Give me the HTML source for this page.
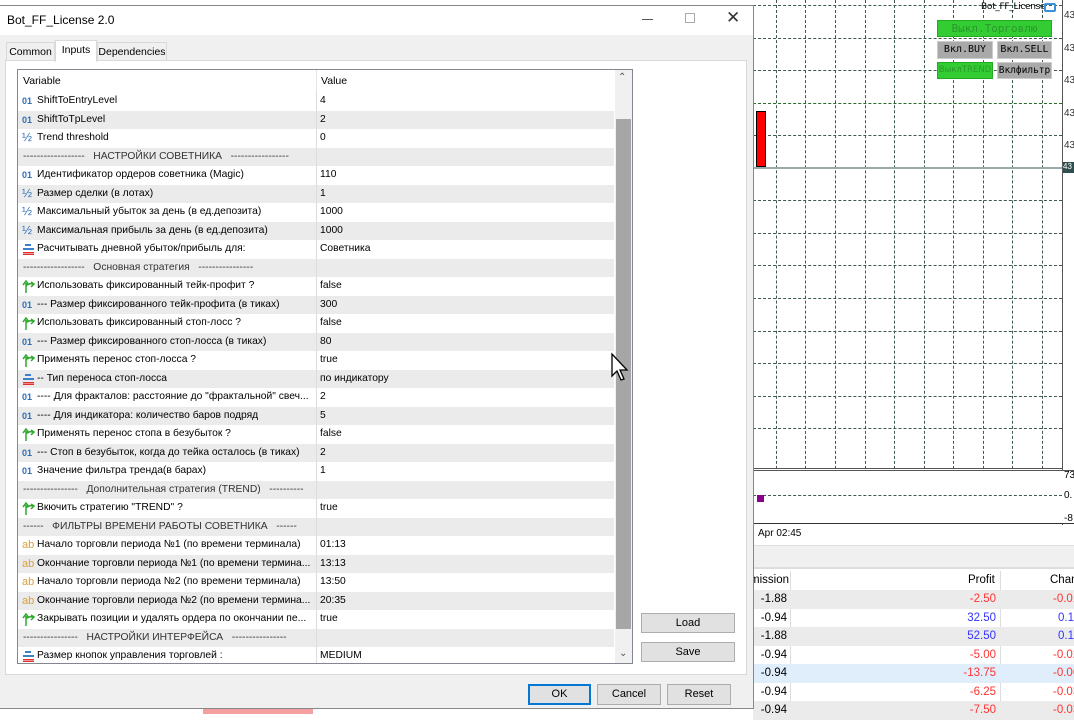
<!DOCTYPE html>
<html><head><meta charset="utf-8">
<style>
*{margin:0;padding:0;box-sizing:border-box}
body{width:1074px;height:714px;overflow:hidden;background:#fff;font-family:"Liberation Sans",sans-serif;font-size:10.5px;color:#000;position:relative}
.a{position:absolute}
.dlg{left:0;top:5px;width:754px;height:704px;background:#f0f0f0;border:1px solid #888;border-left:none}
.title{left:0;top:0;width:753px;height:29px;background:#fff}
.row{position:absolute;left:0;width:596px;height:18.5px;line-height:18px;white-space:nowrap;font-size:10.3px}
.row .v{position:absolute;left:19px;width:276px;overflow:hidden}
.row .val{position:absolute;left:302px;}
.row .sep{position:absolute;left:298px;top:0;width:1px;height:100%;background:#ddd}
.g{background:#ebebeb}
.ic{position:absolute;left:4px;top:0;width:14px;font-size:9px;color:#2f6db5}
.btn{position:absolute;background:#e1e1e1;border:1px solid #adadad;text-align:center;line-height:18px;font-size:11px}
.vl{position:absolute;top:0;width:0;border-left:1px dashed #3d5a50}
.hl{position:absolute;left:753px;width:309px;height:0;border-top:1px dashed #3d5a50}
.tr{position:absolute;left:753px;width:321px;height:18.5px;line-height:18px;font-size:11.5px}
.tr span{position:absolute;text-align:right}
</style></head><body>
<div class="a" style="left:753px;top:0;width:321px;height:545px;background:#fff"></div>
<div class="a" style="left:1062px;top:0;width:1px;height:525px;background:#555"></div>
<div class="vl" style="left:776px;height:524px"></div><div class="vl" style="left:805px;height:524px"></div><div class="vl" style="left:835px;height:524px"></div><div class="vl" style="left:865px;height:524px"></div><div class="vl" style="left:894px;height:524px"></div><div class="vl" style="left:924px;height:524px"></div><div class="vl" style="left:953px;height:524px"></div><div class="vl" style="left:983px;height:524px"></div><div class="vl" style="left:1012px;height:524px"></div><div class="vl" style="left:1042px;height:524px"></div>
<div class="hl" style="top:5px"></div><div class="hl" style="top:38px"></div><div class="hl" style="top:70px"></div><div class="hl" style="top:103px;border-color:#2a6a2a"></div><div class="hl" style="top:135px"></div>
<div class="a" style="left:753px;top:167px;width:309px;height:2px;background:#9aa"></div>
<div class="hl" style="top:200px"></div><div class="hl" style="top:233px"></div><div class="hl" style="top:265px"></div><div class="hl" style="top:298px"></div><div class="hl" style="top:331px"></div><div class="hl" style="top:363px"></div><div class="hl" style="top:396px"></div><div class="hl" style="top:428px"></div>
<div class="a" style="left:753px;top:468px;width:310px;height:1px;background:#555"></div>
<div class="a" style="left:753px;top:470px;width:321px;height:54px;background:#fff;border-top:1px solid #555;border-bottom:1px solid #333"></div>
<div class="hl" style="top:495px"></div>
<div class="a" style="left:757px;top:495px;width:7px;height:7px;background:#8b008b"></div>
<div class="a" style="left:756px;top:111px;width:10px;height:56px;background:#f00;border:1px solid #000"></div>
<div class="a" style="left:1064px;top:0;font-size:10px;color:#333;line-height:32.6px">43<br>43<br>43<br>43<br>43</div>
<div class="a" style="left:1063px;top:162px;width:11px;height:11px;background:#2f4f4f;color:#fff;font-size:8px">43</div>
<div class="a" style="left:1064px;top:470px;font-size:10px">73</div><div class="a" style="left:1064px;top:490px;font-size:10px">0.</div><div class="a" style="left:1064px;top:513px;font-size:10px">-8</div>
<div class="a" style="left:758px;top:528px;font-size:10px">Apr 02:45</div>
<div class="a" style="left:981px;top:2px;font-size:9px;font-family:'DejaVu Sans',sans-serif;letter-spacing:-0.3px">Bot_FF_License</div>
<div class="a" style="left:1044px;top:3px;width:12px;height:9px;border:2px solid #3a8fd8;border-radius:2px"></div>
<div class="a" style="left:937px;top:20px;width:115px;height:17px;background:#33cc33;border:1px solid #2a2;color:#2a9a2a;text-align:center;font:11px 'DejaVu Sans Mono',monospace;line-height:15px">Выкл.Торговлю</div>
<div class="a" style="left:937px;top:41px;width:56px;height:18px;background:#a9a9a9;border:1px solid #ccc;text-align:center;font:10px 'DejaVu Sans Mono',monospace;line-height:16px">Вкл.BUY</div>
<div class="a" style="left:997px;top:41px;width:55px;height:18px;background:#a9a9a9;border:1px solid #ccc;text-align:center;font:10px 'DejaVu Sans Mono',monospace;line-height:16px">Вкл.SELL</div>
<div class="a" style="left:937px;top:62px;width:56px;height:17px;background:#33cc33;border:1px solid #2a2;color:#2a9a2a;text-align:center;font:8.5px 'DejaVu Sans',sans-serif;line-height:15px;overflow:hidden">ВыклTREND</div>
<div class="a" style="left:997px;top:62px;width:55px;height:17px;background:#a9a9a9;border:1px solid #ccc;text-align:center;font:9.5px 'DejaVu Sans Mono',monospace;line-height:15px">Вклфильтр</div>
<div class="a" style="left:753px;top:545px;width:321px;height:24px;background:#f0f0f0;border-top:1px solid #ddd;border-bottom:2px solid #ddd"></div>
<div class="a" style="left:753px;top:571px;width:321px;height:19px;background:#fff;font-size:11.5px;line-height:18px"><span class="a" style="left:-3px">mission</span><span class="a" style="left:215px">Profit</span><span class="a" style="left:297px">Chan</span></div>
<div class="a" style="left:790px;top:571px;width:1px;height:143px;background:#ddd"></div>
<div class="a" style="left:1000px;top:571px;width:1px;height:143px;background:#ddd"></div>
<div class="tr g" style="top:590px"><span style="right:287px">-1.88</span><span style="right:78px;color:#f33">-2.50</span><span style="left:300px;color:#f33">-0.01</span></div>
<div class="tr" style="top:608.5px"><span style="right:287px">-0.94</span><span style="right:78px;color:#33f">32.50</span><span style="left:305px;color:#33f">0.15</span></div>
<div class="tr g" style="top:627px"><span style="right:287px">-1.88</span><span style="right:78px;color:#33f">52.50</span><span style="left:305px;color:#33f">0.12</span></div>
<div class="tr" style="top:645.5px"><span style="right:287px">-0.94</span><span style="right:78px;color:#f33">-5.00</span><span style="left:300px;color:#f33">-0.02</span></div>
<div class="tr" style="top:664px;background:#e0eefb"><span style="right:287px">-0.94</span><span style="right:78px;color:#f33">-13.75</span><span style="left:300px;color:#f33">-0.06</span></div>
<div class="tr" style="top:682.5px"><span style="right:287px">-0.94</span><span style="right:78px;color:#f33">-6.25</span><span style="left:300px;color:#f33">-0.03</span></div>
<div class="tr g" style="top:701px"><span style="right:287px">-0.94</span><span style="right:78px;color:#f33">-7.50</span><span style="left:300px;color:#f33">-0.03</span></div>
<div class="a" style="left:0;top:708px;width:753px;height:6px;background:#fff;border-top:1px solid #555"></div>
<div class="a" style="left:203px;top:709px;width:110px;height:5px;background:#f4a0a0"></div>

<div class="a dlg">
 <div class="a title"><span class="a" style="left:7px;top:7px;font-size:12px">Bot_FF_License 2.0</span>
  <div class="a" style="left:642px;top:13px;width:11px;height:1px;background:#555"></div>
  <div class="a" style="left:685px;top:7px;width:10px;height:10px;border:1px solid #aaa"></div>
  <span class="a" style="left:726px;top:2px;font-size:17px;color:#333">✕</span>
 </div>
 <div class="a" style="left:6px;top:36px;width:49px;height:19px;border:1px solid #d9d9d9;border-bottom:none;background:#f0f0f0;text-align:center;line-height:18px">Common</div>
 <div class="a" style="left:55px;top:34px;width:42px;height:22px;border:1px solid #d9d9d9;border-bottom:none;background:#fff;text-align:center;line-height:18px;z-index:2">Inputs</div>
 <div class="a" style="left:97px;top:36px;width:70px;height:19px;border:1px solid #d9d9d9;border-bottom:none;background:#f0f0f0;text-align:center;line-height:18px">Dependencies</div>
 <div class="a" style="left:5px;top:54px;width:742px;height:615px;background:#fff;border:1px solid #d9d9d9"></div>
 <div class="a" style="left:17px;top:63px;width:616px;height:595px;border:1px solid #828790;background:#fff;overflow:hidden">
  <div class="a" style="left:0;top:0;width:596px;height:22px;line-height:22px"><span class="a" style="left:5px">Variable</span><span class="a" style="left:303px">Value</span><div class="a" style="left:298px;top:0;width:1px;height:22px;background:#e5e5e5"></div></div>
  <div id="rows" class="a" style="left:0;top:22px;width:596px"></div>
  <div class="a" style="left:597px;top:0;width:17px;height:594px;background:#f0f0f0"></div>
  <div class="a" style="left:598px;top:49px;width:15px;height:510px;background:#a6a6a6"></div>
  <span class="a" style="left:600px;top:2px;font-size:10px;color:#555">⌃</span>
  <span class="a" style="left:601px;top:578px;font-size:10px;color:#555">⌄</span>
 </div>
 <div class="btn" style="left:641px;top:607px;width:94px;height:20px">Load</div>
 <div class="btn" style="left:641px;top:636px;width:94px;height:20px">Save</div>
 <div class="btn" style="left:528px;top:678px;width:63px;height:21px;border:2px solid #0078d7;line-height:17px">OK</div>
 <div class="btn" style="left:597px;top:678px;width:64px;height:21px">Cancel</div>
 <div class="btn" style="left:667px;top:678px;width:64px;height:21px">Reset</div>
</div>
<svg class="a" style="left:610px;top:352px" width="22" height="32" viewBox="0 0 22 32"><path d="M2 2 L2 24 L7 19 L11 28 L14 27 L10 18 L17 18 Z" fill="#fff" stroke="#000" stroke-width="1.3"/></svg>
<script>
var I={n:'<span class="ic" style="font-weight:bold">01</span>',h:'<span class="ic" style="font-size:12px;top:-1px">½</span>',b:'<svg class="ic" style="top:3px" width="14" height="13" viewBox="0 0 14 13"><path d="M4 13 V3 M1 5 L4 1 L7 5 M4 6 Q6 3 11 4 M9 2 L12 4 L9 7" stroke="#2eaa2e" stroke-width="1.5" fill="none"/></svg>',e:'<svg class="ic" style="top:4px" width="14" height="11" viewBox="0 0 14 11"><rect x="3" y="0" width="6" height="2" fill="#3a7fd0"/><rect x="1" y="4" width="11" height="2" fill="#3a7fd0"/><rect x="1" y="8" width="11" height="1.5" fill="#e03030"/><rect x="1" y="10" width="11" height="1" fill="#e03030"/></svg>',s:'<span class="ic" style="color:#d9a040;font-size:11px">ab</span>'};
var R=[['n','ShiftToEntryLevel','4'],['n','ShiftToTpLevel','2'],['h','Trend threshold','0'],['','------------------ &nbsp; НАСТРОЙКИ СОВЕТНИКА &nbsp; -----------------',''],['n','Идентификатор ордеров советника (Magic)','110'],['h','Размер сделки (в лотах)','1'],['h','Максимальный убыток за день (в ед.депозита)','1000'],['h','Максимальная прибыль за день (в ед.депозита)','1000'],['e','Расчитывать дневной убыток/прибыль для:','Советника'],['','------------------ &nbsp; Основная стратегия &nbsp; ----------------',''],['b','Использовать фиксированный тейк-профит ?','false'],['n','--- Размер фиксированного тейк-профита (в тиках)','300'],['b','Использовать фиксированный стоп-лосс ?','false'],['n','--- Размер фиксированного стоп-лосса (в тиках)','80'],['b','Применять перенос стоп-лосса ?','true'],['e','-- Тип переноса стоп-лосса','по индикатору'],['n','---- Для фракталов: расстояние до "фрактальной" свеч...','2'],['n','---- Для индикатора: количество баров подряд','5'],['b','Применять перенос стопа в безубыток ?','false'],['n','--- Стоп в безубыток, когда до тейка осталось (в тиках)','2'],['n','Значение фильтра тренда(в барах)','1'],['','---------------- &nbsp; Дополнительная стратегия (TREND) &nbsp; ----------',''],['b','Вкючить стратегию "TREND" ?','true'],['','------ &nbsp; ФИЛЬТРЫ ВРЕМЕНИ РАБОТЫ СОВЕТНИКА &nbsp; ------',''],['s','Начало торговли периода №1 (по времени терминала)','01:13'],['s','Окончание торговли периода №1 (по времени термина...','13:13'],['s','Начало торговли периода №2 (по времени терминала)','13:50'],['s','Окончание торговли периода №2 (по времени термина...','20:35'],['b','Закрывать позиции и удалять ордера по окончании пе...','true'],['','---------------- &nbsp; НАСТРОЙКИ ИНТЕРФЕЙСА &nbsp; ----------------',''],['e','Размер кнопок управления торговлей :','MEDIUM']];
var h='';R.forEach(function(r,i){var t=i*18.5;var c=i%2?'row g':'row';
if(!r[0])h+='<div class="'+c+'" style="top:'+t+'px;color:#333"><span class="a" style="left:5px">'+r[1]+'</span><div class="sep"></div></div>';
else h+='<div class="'+c+'" style="top:'+t+'px">'+I[r[0]]+'<span class="v">'+r[1]+'</span><div class="sep"></div><span class="val">'+r[2]+'</span></div>';});
document.getElementById('rows').innerHTML=h;
</script>
</body></html>
